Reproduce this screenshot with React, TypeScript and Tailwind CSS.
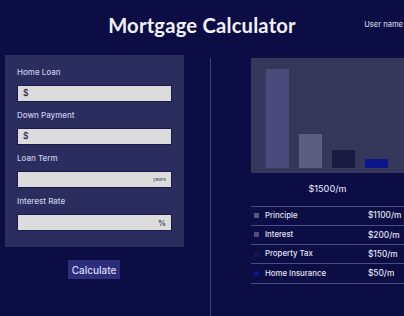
import React from "react";

const fields = [
  { label: "Home Loan", prefix: "$" },
  { label: "Down Payment", prefix: "$" },
  { label: "Loan Term", suffix: "years" },
  { label: "Interest Rate", suffix: "%" },
];

const rows = [
  { name: "Principle", value: "$1100/m", dot: "bg-[#56577c]" },
  { name: "Interest", value: "$200/m", dot: "bg-[#4b4c78]" },
  { name: "Property Tax", value: "$150/m", dot: "bg-[#15164a]" },
  { name: "Home Insurance", value: "$50/m", dot: "bg-[#0d158a]" },
];

function Field({ label, prefix, suffix }: { label: string; prefix?: string; suffix?: string }) {
  return (
    <div className="flex flex-col">
      <div className="text-[8px] font-medium leading-[12px] text-[#c9cae6]">{label}</div>
      <div className="mt-[7px] h-[17px] w-[155px] bg-[#dddcdc] border border-[#1a1b4c] flex items-center px-[5px]">
        {prefix && <span className="text-[8.5px] font-semibold text-[#2b2c5c]">{prefix}</span>}
        {suffix && (
          <span
            className={`ml-auto text-[#3a3b5e] ${suffix === "%" ? "text-[8px] font-semibold" : "text-[5px]"}`}
          >
            {suffix}
          </span>
        )}
      </div>
    </div>
  );
}

export default function App() {
  return (
    <div
      className="w-[404px] h-[316px] overflow-hidden bg-[#0c0d44] text-white"
      style={{ fontFamily: "Inter, 'Liberation Sans', sans-serif" }}
    >
      <header className="h-[50px] grid grid-cols-[1fr_auto_1fr] items-center">
        <div />
        <h1 className="text-[20.2px] font-bold tracking-[0.2px] text-[#f1f1f8]" style={{ fontFamily: "Lato, sans-serif" }}>
          Mortgage Calculator
        </h1>
        <div className="justify-self-end text-[7.5px] font-medium text-[#c8c9e0] pr-[1px]">User name</div>
      </header>

      <main className="flex pt-[5px] h-[266px]">
        <section className="w-[210px] flex flex-col">
          <div className="ml-[5px] w-[179px] bg-[#2b2d5f] pt-[11px] pb-[16px] pl-[12px] flex flex-col gap-[7px]">
            {fields.map((f) => (
              <Field key={f.label} {...f} />
            ))}
          </div>
          <button className="mt-[13px] ml-[68px] w-[52px] h-[19px] bg-[#2c2e7c] text-[10px] font-medium text-[#d7d8f2] leading-none">
            Calculate
          </button>
        </section>

        <div className="w-px bg-[#3e4074] mt-[3px]" />

        <section className="flex-1 pl-[40px] pt-[3px] flex flex-col">
          <div className="h-[115px] bg-[#35375a] flex items-end gap-[10px] pl-[15px] pb-[5px]">
            <div className="w-[23px] h-[99px] bg-[#4a4b7c]" />
            <div className="w-[23px] h-[34px] bg-[#5d5e7f]" />
            <div className="w-[23px] h-[18px] bg-[#1a1b42]" />
            <div className="w-[23px] h-[9px] bg-[#0c158c]" />
          </div>
          <div className="mt-[9px] text-center text-[9px] font-medium text-[#dcdcee]">$1500/m</div>
          <div className="mt-[10px] border-b border-[#4b4d80]">
            {rows.map((r) => (
              <div key={r.name} className="h-[19.25px] border-t border-[#4b4d80] flex items-center text-[7.8px] font-medium text-[#e4e4f2]">
                <span className={`ml-[3px] w-[5px] h-[5px] ${r.dot}`} />
                <span className="ml-[6px]">{r.name}</span>
                <span className="ml-auto w-[36px] text-[8.3px]">{r.value}</span>
              </div>
            ))}
          </div>
        </section>
      </main>
    </div>
  );
}
